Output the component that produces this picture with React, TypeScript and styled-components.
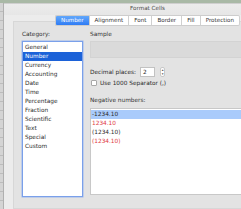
import React, { useState } from "react";
import styled, { createGlobalStyle } from "styled-components";

const GlobalStyle = createGlobalStyle`
  html, body {
    margin: 0;
    padding: 0;
    background: #dcdcdc;
  }
  * {
    box-sizing: border-box;
  }
`;

const tabs = ["Number", "Alignment", "Font", "Border", "Fill", "Protection"];
const categories = [
  "General",
  "Number",
  "Currency",
  "Accounting",
  "Date",
  "Time",
  "Percentage",
  "Fraction",
  "Scientific",
  "Text",
  "Special",
  "Custom",
];
const negatives = [
  { label: "-1234.10", red: false },
  { label: "1234.10", red: true },
  { label: "(1234.10)", red: false },
  { label: "(1234.10)", red: true },
];

export default function App() {
  const [category, setCategory] = useState("Number");
  const [negative, setNegative] = useState(0);

  return (
    <>
      <GlobalStyle />
      <Desktop>
        <TopStrip />
        <SheetEdge />
        <Window>
          <TitleBar>Format Cells</TitleBar>
          <TabBar>
            {tabs.map((t) => (
              <Tab key={t} $active={t === "Number"}>
                {t}
              </Tab>
            ))}
          </TabBar>
          <Panel>
            <LeftColumn>
              <Label>Category:</Label>
              <CategoryList>
                {categories.map((c) => (
                  <CategoryItem
                    key={c}
                    $selected={c === category}
                    onClick={() => setCategory(c)}
                  >
                    {c}
                  </CategoryItem>
                ))}
              </CategoryList>
            </LeftColumn>
            <RightColumn>
              <Label>Sample</Label>
              <SampleBox />
              <DecimalRow>
                <span>Decimal places:</span>
                <NumberInput>2</NumberInput>
                <Stepper>
                  <span>▴</span>
                  <span>▾</span>
                </Stepper>
              </DecimalRow>
              <CheckRow>
                <CheckBox />
                <span>Use 1000 Separator (,)</span>
              </CheckRow>
              <NegLabel>Negative numbers:</NegLabel>
              <NegList>
                {negatives.map((n, i) => (
                  <NegItem
                    key={i}
                    $red={n.red}
                    $selected={i === negative}
                    onClick={() => setNegative(i)}
                  >
                    {n.label}
                  </NegItem>
                ))}
              </NegList>
            </RightColumn>
          </Panel>
        </Window>
      </Desktop>
    </>
  );
}

const Desktop = styled.div`
  width: 241px;
  height: 209px;
  overflow: hidden;
  display: grid;
  grid-template-columns: 4px 1fr;
  grid-template-rows: 3px 1fr;
  font-family: "DejaVu Sans", "Liberation Sans", sans-serif;
  color: #2a2a2a;
`;

const TopStrip = styled.div`
  grid-column: 1 / 3;
  background: #a9b9a6;
`;

const SheetEdge = styled.div`
  background-color: #d4d4d4;
  background-image: repeating-linear-gradient(
    to bottom,
    transparent 0,
    transparent 8px,
    #bcbcbc 8px,
    #bcbcbc 9px
  );
  border-right: 1px solid #b0b0b0;
`;

const Window = styled.div`
  width: 287px;
  background: #ececec;
  display: flex;
  flex-direction: column;
  border-top: 1px solid #cfcfcf;
`;

const TitleBar = styled.div`
  height: 11px;
  font-size: 5.6px;
  line-height: 6px;
  padding-top: 0.5px;
  text-align: center;
  color: #4a4a4a;
  background: linear-gradient(#ececec, #e6e6e6);
`;

const TabBar = styled.div`
  display: flex;
  justify-content: center;
  margin-bottom: -5px;
  position: relative;
  z-index: 1;
`;

const Tab = styled.div<{ $active: boolean }>`
  height: 11px;
  padding: 0 5px;
  font-size: 5.6px;
  line-height: 9px;
  color: ${(p) => (p.$active ? "#ffffff" : "#333333")};
  background: ${(p) =>
    p.$active ? "linear-gradient(#62a8fb, #2f7cf5)" : "#ffffff"};
  border-top: 1px solid #cdcdcd;
  border-bottom: 1px solid #cdcdcd;
  border-right: 1px solid #d0d0d0;
  &:first-child {
    border-radius: 2px 0 0 2px;
    border-left: 1px solid #cdcdcd;
  }
  &:last-child {
    border-radius: 0 2px 2px 0;
  }
`;

const Panel = styled.div`
  margin-left: 9px;
  flex: 1;
  background: #e3e3e3;
  border: 1px solid #d7d7d7;
  display: flex;
  gap: 7px;
  padding: 8px 0 0 8px;
`;

const LeftColumn = styled.div`
  width: 61px;
  display: flex;
  flex-direction: column;
`;

const RightColumn = styled.div`
  flex: 1;
  display: flex;
  flex-direction: column;
`;

const Label = styled.div`
  font-size: 5.8px;
  line-height: 8px;
  height: 11px;
  color: #333;
`;

const CategoryList = styled.div`
  height: 156px;
  background: #ffffff;
  border: 1px solid #7aa0ea;
  box-shadow: 0 0 0 0.5px #9bb8f0;
  padding-top: 1px;
`;

const CategoryItem = styled.div<{ $selected: boolean }>`
  height: 9px;
  font-size: 5.8px;
  line-height: 9px;
  padding-left: 2px;
  color: ${(p) => (p.$selected ? "#ffffff" : "#2c2c2c")};
  background: ${(p) => (p.$selected ? "#1c62d8" : "transparent")};
`;

const SampleBox = styled.div`
  height: 17px;
  background: #dadada;
  border: 1px solid #d3d3d3;
  border-right: none;
`;

const DecimalRow = styled.div`
  display: flex;
  align-items: center;
  gap: 2px;
  margin-top: 9px;
  height: 10px;
  font-size: 5.8px;
`;

const NumberInput = styled.div`
  width: 15px;
  height: 10px;
  background: #ffffff;
  border: 1px solid #c2c2c2;
  font-size: 5.8px;
  line-height: 8px;
  padding-left: 2px;
  margin-left: 2px;
`;

const Stepper = styled.div`
  width: 5px;
  height: 10px;
  background: #ffffff;
  border: 1px solid #c8c8c8;
  border-radius: 2px;
  display: flex;
  flex-direction: column;
  align-items: center;
  font-size: 3.5px;
  line-height: 4px;
  color: #555;
  margin-left: 3px;
`;

const CheckRow = styled.div`
  display: flex;
  align-items: center;
  gap: 3px;
  margin-top: 2px;
  height: 8px;
  padding-left: 1px;
  font-size: 5.8px;
`;

const CheckBox = styled.div`
  width: 6px;
  height: 6px;
  background: #ffffff;
  border: 1px solid #a8a8a8;
  border-radius: 1px;
`;

const NegLabel = styled(Label)`
  margin-top: 9px;
  height: 12px;
`;

const NegList = styled.div`
  height: 87px;
  background: #ffffff;
  border: 1px solid #c8c8c8;
  border-right: none;
  padding-top: 1px;
`;

const NegItem = styled.div<{ $red: boolean; $selected: boolean }>`
  height: 9px;
  font-size: 5.8px;
  line-height: 9px;
  padding-left: 1px;
  color: ${(p) => (p.$red ? "#e0393e" : "#2a2a2a")};
  background: ${(p) => (p.$selected ? "#a9cbfb" : "transparent")};
`;
